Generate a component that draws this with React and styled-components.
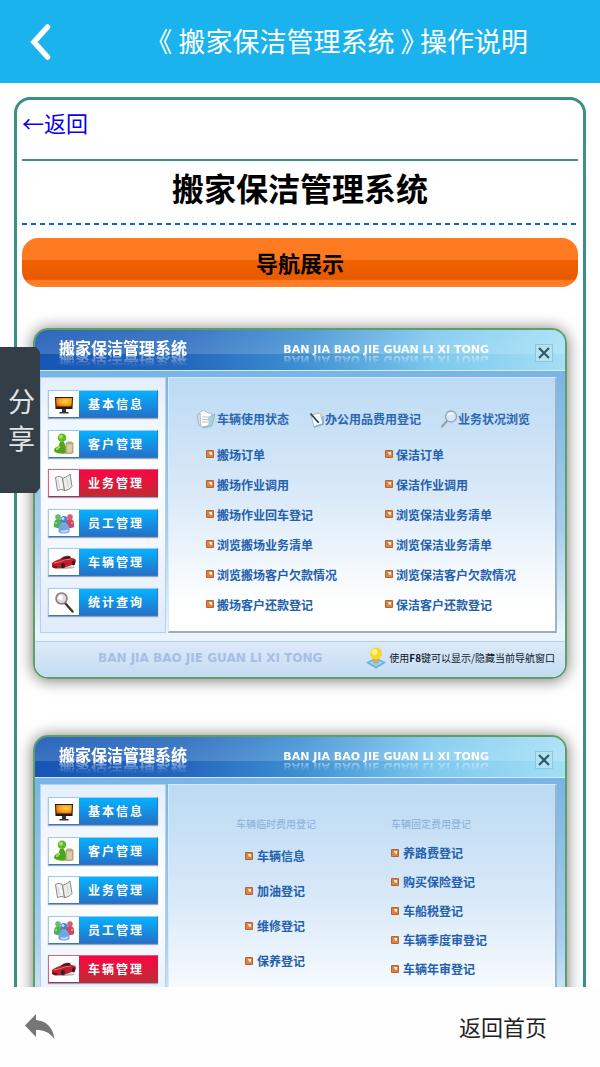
import React from "react";
import styled, { createGlobalStyle, css } from "styled-components";

const Global = createGlobalStyle`
  * { box-sizing: border-box; }
  body { margin: 0; background: #fff; color: #000; font-family: "Noto Sans CJK SC", "Liberation Sans", sans-serif; }
  button { font: inherit; border: 0; margin: 0; padding: 0; background: none; cursor: pointer; }
  h1, h2, h3, h4, p, ul { margin: 0; padding: 0; }
  ul { list-style: none; }
  a { text-decoration: none; }
  svg { display: block; flex: none; }
`;

const Screen = styled.div`
  height: 100vh;
  display: flex;
  flex-direction: column;
  position: relative;
`;

const TopBar = styled.header`
  height: 83px;
  flex: none;
  display: flex;
  align-items: center;
  justify-content: space-between;
  padding: 0 72px 0 28px;
  background: #1ab3ee;
`;

const TopTitle = styled.h1`
  font-size: 27px;
  line-height: 36px;
  padding-bottom: 2px;
  font-weight: 400;
  font-feature-settings: "halt";
  color: #fff;
  white-space: nowrap;
`;

const Content = styled.main`
  flex: 1;
  min-height: 0;
  overflow-y: auto;
  scrollbar-width: none;
  padding: 14px 14px 0;
`;

const Card = styled.article`
  border: 3px solid #389184;
  border-radius: 16px;
  padding: 8px 5px 56px;
`;

const BackLink = styled.a`
  display: block;
  color: #0a00f0;
  font-size: 22px;
  line-height: 28px;
  padding-bottom: 23px;
  border-bottom: 2px solid #389184;
`;

const PageTitle = styled.h2`
  font-size: 32px;
  line-height: 48px;
  padding: 2px 0 12px;
  text-align: center;
`;

const Dashes = styled.div`
  height: 2px;
  background: repeating-linear-gradient(90deg, #0a66cc 0 5px, transparent 5px 9px);
`;

const SectionTitle = styled.h3`
  margin-top: 13px;
  height: 49px;
  border-radius: 16px;
  font-size: 22px;
  line-height: 49px;
  text-align: center;
  background: linear-gradient(#ff7b22 0 44%, #f26100 46%, #e65a00 84%, #ff7a22 87%, #ff7f2a);
`;

const Panels = styled.div`
  display: flex;
  flex-direction: column;
  gap: 56px;
  padding: 41px 11px 0;
`;

const Panel = styled.section`
  border: 2px solid #5f9f62;
  border-radius: 15px;
  overflow: hidden;
  box-shadow: 0 1px 16px rgba(0, 0, 0, 0.55);
  background: linear-gradient(#79b4e4 40px, #a6cdf0 200px, #eaf4fc 300px);
`;

const PanelBar = styled.header`
  height: 41px;
  display: flex;
  align-items: flex-start;
  padding: 8px 12px 0 24px;
  border-bottom: 1px solid #d3ebfa;
  background:
    linear-gradient(rgba(255, 255, 255, 0.1), rgba(255, 255, 255, 0.17) 60%, transparent 61%),
    linear-gradient(90deg, #1655b4, #2467bd 28%, #3d8ed2 50%, #7cc8ee 75%, #a3dff6);
`;

const reflect = css`
  -webkit-box-reflect: below -5px linear-gradient(transparent 15%, rgba(0, 0, 0, 0.7));
`;

const PanelTitle = styled.h4`
  flex: 1;
  font-size: 16px;
  line-height: 18px;
  color: #fff;
  ${reflect}
`;

const Latin = styled.p`
  font-family: "DejaVu Sans", Inter, sans-serif;
  font-weight: 700;
  font-size: ${(p) => (p.$footer ? 12 : 11)}px;
  line-height: 14px;
  white-space: nowrap;
  color: ${(p) => (p.$footer ? "#a5bee4" : "#fff")};
  ${(p) => !p.$footer && css`
    margin: 5px 46px 0 0;
    ${reflect}
  `}
`;

const CloseButton = styled.button`
  width: 18px;
  height: 18px;
  margin-top: 6px;
  display: grid;
  place-items: center;
  border: 1px solid #8fc6dc;
  background: #b4e3f0;
`;

const PanelBody = styled.div`
  display: flex;
  gap: 2px;
  height: 270px;
  padding: 6px 8px 8px 5px;
`;

const Sidebar = styled.nav`
  flex: none;
  width: 126px;
  display: flex;
  flex-direction: column;
  justify-content: space-between;
  padding: 12px 7px 16px;
  border: 1px solid #b3d2f1;
  background: linear-gradient(#e4effb, #fbfdff 35%, #f6f9fe 60%, #dfebfa);
`;

const MenuButton = styled.button`
  display: flex;
  height: 28px;
  width: 110px;
  color: #fff;
  border: 1px solid ${(p) => (p.$active ? "#e2606f" : "#9ecbed")};
  border-bottom-color: ${(p) => (p.$active ? "#a83343" : "#3f77b4")};
  border-right-color: ${(p) => (p.$active ? "#a83343" : "#3f77b4")};
  background: ${(p) => (p.$active ? "linear-gradient(#fa0546, #c22b32)" : "linear-gradient(#05b2ff, #2371c9)")};
  box-shadow: 0 1px 1px rgba(60, 90, 140, 0.5);
`;

const MenuIcon = styled.span`
  width: 30px;
  height: 26px;
  display: grid;
  place-items: center;
  background: #fff;
`;

const MenuText = styled.span`
  padding-left: 9px;
  font-size: 12px;
  line-height: 26px;
  font-weight: 700;
  letter-spacing: 2px;
`;

const Pane = styled.div`
  flex: 1;
  min-width: 0;
  border: 1px solid #d5eafa;
  border-right: 2px solid #9cb3cc;
  border-bottom: 2px solid #a3abb5;
  background: linear-gradient(#bcdaf3, #d9e9f8 45%, #fff 90%);
`;

const Shortcuts = styled.ul`
  display: flex;
  justify-content: space-between;
  padding: 31px 25px 10px 27px;
`;

const Shortcut = styled.a`
  display: flex;
  align-items: center;
  font-size: 12px;
  line-height: 20px;
  font-weight: 700;
  color: #2c68b2;
  white-space: nowrap;
`;

const Columns = styled.div`
  display: grid;
  grid-template-columns: ${(p) => p.$first}px 1fr;
  padding: ${(p) => p.$top}px 0 0 ${(p) => p.$left}px;
`;

const GroupTitle = styled.p`
  font-size: 10px;
  line-height: 20px;
  margin-bottom: 4px;
  color: #87aedb;
`;

const Entries = styled.ul`
  padding-left: ${(p) => p.$indent || 0}px;
`;

const Entry = styled.a`
  display: flex;
  align-items: center;
  gap: ${(p) => p.$gap}px;
  height: ${(p) => p.$pitch}px;
  font-size: 12px;
  font-weight: 700;
  color: #2360ae;
  white-space: nowrap;
`;

const PanelFoot = styled.footer`
  height: 36px;
  display: flex;
  align-items: center;
  justify-content: space-between;
  padding: 0 10px 4px 63px;
  border-top: 1px solid #b7d2ec;
  background: linear-gradient(#dceafa, #cfe1f5 60%, #c3daf2);
`;

const Hint = styled.p`
  display: flex;
  align-items: center;
  gap: 3px;
  font-size: 10px;
  line-height: 20px;
  color: #10151f;
  white-space: nowrap;
`;

const ShareTab = styled.button`
  && {
    position: absolute;
    left: 0;
    top: 347px;
    width: 40px;
    height: 146px;
    padding: 0 4px 3px 7px;
    background: #343e47;
    color: #e2e4e6;
    font-size: 27px;
    line-height: 37px;
    clip-path: polygon(0 0, 36px 0, 100% 5px, 100% 141px, 36px 100%, 0 100%);
  }
`;

const BottomBar = styled.footer`
  height: 80px;
  flex: none;
  display: flex;
  align-items: center;
  justify-content: space-between;
  padding: 0 53px 0 25px;
  background: #fefefe;
`;

const HomeLink = styled.a`
  font-size: 22px;
  line-height: 32px;
  padding-bottom: 3px;
  color: #222;
`;

const Bullet = () => (
  <svg width="8" height="8" viewBox="0 0 8 8">
    <rect width="8" height="8" rx="1" fill="#b8602f" />
    <rect x="1" y="1" width="6" height="6" fill="#d98345" />
    <path d="M3 2h3v3L4 4.500z" fill="#fff3e2" />
  </svg>
);

const Monitor = () => (
  <svg width="20" height="20" viewBox="0 0 20 20">
    <defs>
      <radialGradient id="glow" cx=".6" cy=".4" r=".8">
        <stop offset="0" stopColor="#ffd83a" />
        <stop offset=".55" stopColor="#f99a1b" />
        <stop offset="1" stopColor="#d8480d" />
      </radialGradient>
    </defs>
    <path d="M1 3h18l-.5 12h-17z" fill="#241a18" />
    <path d="M2 4h16l-.5 8.500H2.500z" fill="url(#glow)" />
    <path d="M8 15h4v3h2.500v1.500h-9V18H8z" fill="#3a3230" />
  </svg>
);

const Person = () => (
  <svg width="22" height="22" viewBox="0 0 22 22">
    <circle cx="9" cy="4.800" r="4.300" fill="#5fb827" />
    <circle cx="8" cy="3.800" r="2" fill="#a4e06a" />
    <path d="M1 18c0-3 2-4 4.500-5L7 9h4l1.500 4c3 1 4.500 2 4.500 5-2 3.500-13 3.500-16 0z" fill="#4ea51c" />
    <path d="M4 17c0-2 1-3 3-3.500" stroke="#9be05a" strokeWidth="2" fill="none" />
    <path d="M12.500 10l2-1.500h4l2 1.500v10l-2 1h-6z" fill="#b9a983" />
    <path d="M14 11.500h5v8h-5z" fill="#d9cda9" />
  </svg>
);

const Book = () => (
  <svg width="20" height="20" viewBox="0 0 20 20">
    <path d="M1.500 4.500C4 3 6.500 3 8.500 5l2 12.500C8.500 16 6 16.500 3.500 17.500z" fill="#f4f4f2" stroke="#858583" />
    <path d="M8.500 5C10 5 13 4 16 1l2 12.500c-2 2.500-5 4-7.500 4z" fill="#ececea" stroke="#858583" />
    <path d="M4 6.500l1.500 8.500M13 5.500l1.500 8.500" stroke="#cfcfcd" />
  </svg>
);

const People = () => (
  <svg width="22" height="22" viewBox="0 0 22 22">
    <circle cx="5" cy="5" r="2.800" fill="#5fc069" />
    <path d="M1 15c-.5-5 1-8 4-8s5 3 4.500 8c-2 1.500-6 1.500-8.500 0z" fill="#4cb457" />
    <circle cx="17" cy="5" r="2.800" fill="#db5a72" />
    <path d="M12.500 15c-.5-5 1-8 4.500-8s4.500 3 4 8c-2 1.500-6 1.500-8.500 0z" fill="#cf4862" />
    <circle cx="11" cy="7.500" r="3.600" fill="#4c7fd0" />
    <path d="M5.500 20c-.5-6 2-9 5.500-9s6 3 5.500 9c-3 2-8 2-11 0z" fill="#6fa6ea" />
    <path d="M8 19c3 1 5 1 7-1" stroke="#c3dcf9" strokeWidth="2" fill="none" />
    <circle cx="10" cy="6.500" r="1.500" fill="#c3dbf8" />
    <path d="M3 12v-2M19 12v-2" stroke="#fff" strokeWidth="1.200" opacity=".6" />
  </svg>
);

const Car = () => (
  <svg width="26" height="16" viewBox="0 0 26 16">
    <ellipse cx="13" cy="13.500" rx="11" ry="1.500" fill="#b9b9b9" />
    <path d="M1 9c2-2 5-3 8-4 3-3 7-4 10-3l1 2c3 0 5 1 5 3l-1 3-12 4-8 .5L1 13z" fill="#c51c28" />
    <path d="M10 5c3-2 6-3 9-2.500l1 2.500-6 1z" fill="#3b2427" />
    <path d="M3 9c4-1 7-1 10-3l7-1" stroke="#f2727a" strokeWidth="1" fill="none" />
    <ellipse cx="12" cy="11.500" rx="2" ry="2.700" fill="#25252b" />
    <ellipse cx="22.500" cy="9" rx="1.600" ry="2.500" fill="#25252b" />
    <path d="M1.500 11.500l5 .8-1 1.500-4-.6z" fill="#4f1116" />
  </svg>
);

const Magnifier = () => (
  <svg width="20" height="22" viewBox="0 0 20 22">
    <path d="M11 12l7.500 8.500" stroke="#3c332c" strokeWidth="2.400" strokeLinecap="round" />
    <circle cx="7.500" cy="7.500" r="5.500" fill="#ddd7f6" stroke="#8a7c62" strokeWidth="1.500" />
    <circle cx="6.500" cy="6.500" r="2.500" fill="#fff" />
  </svg>
);

const Files = () => (
  <svg width="21" height="20" viewBox="0 0 21 20">
    <path d="M1 6l5-3 2 12-5 2z" fill="#d7dde2" stroke="#9ca9b2" strokeWidth=".7" />
    <path d="M4 3l4-2 2 2 6 2-2 12-9 1z" fill="#fff" stroke="#9faab3" strokeWidth=".7" />
    <path d="M6 8h7M6 10.500h7M6 13h6" stroke="#a9b4bc" strokeWidth=".8" />
    <path d="M13 8l6-3-3 12-9 2 6-3z" fill="#9fd0de" stroke="#6ba6b8" strokeWidth=".7" opacity=".8" />
  </svg>
);

const Notepad = () => (
  <svg width="16" height="18" viewBox="0 0 16 18">
    <path d="M2 5l9-2 3 11-9 3z" fill="#f8fafb" stroke="#94a9b8" strokeWidth=".7" />
    <path d="M5 17l9-3V6" stroke="#6fb4cb" strokeWidth="1.500" fill="none" />
    <path d="M1.500 3.500L9 12l1 .5" stroke="#27435c" strokeWidth="1.700" fill="none" />
    <path d="M10 4l3-1 .5 3z" fill="#e7d778" />
  </svg>
);

const Lens = () => (
  <svg width="17" height="18" viewBox="0 0 17 18">
    <path d="M6 11L1 16.500" stroke="#98a1aa" strokeWidth="2.200" strokeLinecap="round" />
    <circle cx="10" cy="6.500" r="5.500" fill="#d7e9f7" stroke="#96a3b0" strokeWidth="1.300" />
    <path d="M7 5.500c1-2 3-2.500 5-1.500" stroke="#fff" strokeWidth="1.200" fill="none" />
  </svg>
);

const Bulb = () => (
  <svg width="20" height="22" viewBox="0 0 20 22">
    <path d="M0 15.500l10-5 10 5-10 6z" fill="#68afdc" />
    <path d="M3 15.500l7-3.500 7 3.500-7 4z" fill="#9bd0ee" />
    <path d="M7 11h6v4c-1.500 1.800-4.500 1.800-6 0z" fill="#c2ae5c" />
    <circle cx="10" cy="6.500" r="6" fill="#f7d91c" />
    <circle cx="8.500" cy="5" r="3" fill="#fff69a" />
  </svg>
);

const menu = [
  ["基本信息", Monitor],
  ["客户管理", Person],
  ["业务管理", Book],
  ["员工管理", People],
  ["车辆管理", Car],
  ["统计查询", Magnifier],
];

const shortcuts = [
  ["车辆使用状态", Files],
  ["办公用品费用登记", Notepad],
  ["业务状况浏览", Lens],
];

const moving = ["搬场订单", "搬场作业调用", "搬场作业回车登记", "浏览搬场业务清单", "浏览搬场客户欠款情况", "搬场客户还款登记"];
const cleaning = ["保洁订单", "保洁作业调用", "浏览保洁业务清单", "浏览保洁业务清单", "浏览保洁客户欠款情况", "保洁客户还款登记"];
const running = ["车辆信息", "加油登记", "维修登记", "保养登记"];
const fixed = ["养路费登记", "购买保险登记", "车船税登记", "车辆季度审登记", "车辆年审登记"];

function EntryList({ items, pitch, gap = 3, indent }) {
  return (
    <Entries $indent={indent}>
      {items.map((text, i) => (
        <li key={i}>
          <Entry href="#" $pitch={pitch} $gap={gap}><Bullet />{text}</Entry>
        </li>
      ))}
    </Entries>
  );
}

function SystemPanel({ active, children }) {
  return (
    <Panel>
      <PanelBar>
        <PanelTitle>搬家保洁管理系统</PanelTitle>
        <Latin>BAN JIA BAO JIE GUAN LI XI TONG</Latin>
        <CloseButton aria-label="关闭">
          <svg width="14" height="14" viewBox="0 0 14 14">
            <path d="M2 2l10 10M12 2L2 12" stroke="#2c5870" strokeWidth="2.200" />
          </svg>
        </CloseButton>
      </PanelBar>
      <PanelBody>
        <Sidebar>
          {menu.map(([text, Icon]) => (
            <MenuButton key={text} $active={text === active}>
              <MenuIcon><Icon /></MenuIcon>
              <MenuText>{text}</MenuText>
            </MenuButton>
          ))}
        </Sidebar>
        <Pane>{children}</Pane>
      </PanelBody>
      <PanelFoot>
        <Latin $footer>BAN JIA BAO JIE GUAN LI XI TONG</Latin>
        <Hint><Bulb /><span>使用<b>F8</b>键可以显示/隐藏当前导航窗口</span></Hint>
      </PanelFoot>
    </Panel>
  );
}

export default function App() {
  return (
    <Screen>
      <Global />
      <TopBar>
        <button aria-label="后退">
          <svg width="24" height="38" viewBox="0 0 24 38">
            <path d="M19.500 4L6 19l13.500 15" fill="none" stroke="#fff" strokeWidth="5.500" strokeLinecap="round" />
          </svg>
        </button>
        <TopTitle>《 搬家保洁管理系统 》 操作说明</TopTitle>
      </TopBar>
      <Content>
        <Card>
          <BackLink href="#">←返回</BackLink>
          <PageTitle>搬家保洁管理系统</PageTitle>
          <Dashes />
          <SectionTitle>导航展示</SectionTitle>
          <Panels>
            <SystemPanel active="业务管理">
              <Shortcuts>
                {shortcuts.map(([text, Icon]) => (
                  <li key={text}><Shortcut href="#"><Icon />{text}</Shortcut></li>
                ))}
              </Shortcuts>
              <Columns $first={179} $top={0} $left={37}>
                <EntryList items={moving} pitch={30} />
                <EntryList items={cleaning} pitch={30} />
              </Columns>
            </SystemPanel>
            <SystemPanel active="车辆管理">
              <Columns $first={155} $top={29} $left={67}>
                <div>
                  <GroupTitle>车辆临时费用登记</GroupTitle>
                  <EntryList items={running} pitch={35} gap={4} indent={9} />
                </div>
                <div>
                  <GroupTitle>车辆固定费用登记</GroupTitle>
                  <EntryList items={fixed} pitch={29} gap={4} />
                </div>
              </Columns>
            </SystemPanel>
          </Panels>
        </Card>
      </Content>
      <BottomBar>
        <button aria-label="返回上一页">
          <svg width="30" height="26" viewBox="0 0 30 26">
            <path d="M0 11.500L11 0v6C22 7 28 14 29.500 25 24 18 19 16 11 16v7z" fill="#767676" />
          </svg>
        </button>
        <HomeLink href="#">返回首页</HomeLink>
      </BottomBar>
      <ShareTab>分<br />享</ShareTab>
    </Screen>
  );
}
